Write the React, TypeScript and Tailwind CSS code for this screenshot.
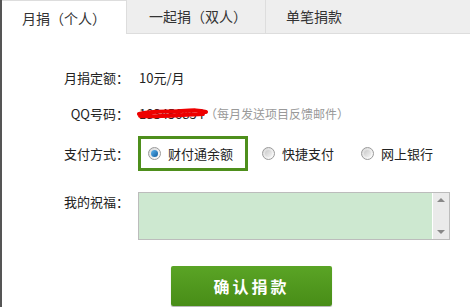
import React from "react";

const font = { fontFamily: '"Noto Sans CJK SC", "Liberation Sans", sans-serif' };

const Radio = ({ checked }: { checked?: boolean }) => (
  <span className="flex h-[13px] w-[13px] items-center justify-center rounded-full border border-[#9a9a9a] bg-gradient-to-br from-[#d8d8d8] to-[#ffffff]">
    {checked ? (
      <span className="h-[7px] w-[7px] rounded-full bg-gradient-to-br from-[#5cb6f0] to-[#0b5c9e]" />
    ) : (
      <span className="h-[7px] w-[7px] rounded-full bg-gradient-to-br from-[#c9c9c9] to-[#f4f4f4]" />
    )}
  </span>
);

const App = () => {
  return (
    <div style={font} className="flex h-[307px] w-[470px] flex-col overflow-hidden border-l-2 border-[#555] bg-white text-[13px] text-[#222]">
      {/* tabs */}
      <div className="flex h-[34px] shrink-0">
        <div className="flex w-[125px] items-center justify-center border-t border-r border-[#ddd] bg-white pt-[1px] text-[14px] text-[#333]">
          月捐（个人）
        </div>
        <div className="flex w-[139px] items-center justify-center border-r border-b border-[#ddd] bg-[#eee] pl-[4px] text-[14px] text-[#333]">
          一起捐（双人）
        </div>
        <div className="flex flex-1 items-center border-b border-[#ddd] bg-[#eee] pl-[20px] text-[14px] text-[#333]">
          单笔捐款
        </div>
      </div>

      {/* form */}
      <div className="flex flex-col pt-[34px]">
        <div className="flex h-[20px] items-center">
          <span className="w-[127px] text-right">月捐定额：</span>
          <span className="ml-[10px]">10元/月</span>
        </div>

        <div className="mt-[16px] flex h-[20px] items-center">
          <span className="w-[127px] text-right">QQ号码：</span>
          <span className="relative ml-[10px]">
            183456854
            <svg className="absolute left-[-2px] top-[2px]" width="72" height="14" viewBox="0 0 72 14">
              <path d="M2 8 C 14 5, 30 6, 44 5 S 62 4, 69 6 M3 10 C 20 11, 40 9, 66 8" stroke="#ee0000" strokeWidth="4" fill="none" strokeLinecap="round" />
            </svg>
          </span>
          <span className="ml-[1px] text-[12px] text-[#999]">（每月发送项目反馈邮件）</span>
        </div>

        <div className="mt-[12px] flex h-[35px] items-center">
          <span className="w-[127px] text-right">支付方式：</span>
          <div className="ml-[9px] flex h-[35px] w-[110px] items-center border-[3px] border-[#4e8f1c] pl-[7px]">
            <Radio checked />
            <span className="ml-[7px]">财付通余额</span>
          </div>
          <div className="ml-[14px] flex items-center">
            <Radio />
            <span className="ml-[7px]">快捷支付</span>
          </div>
          <div className="ml-[27px] flex items-center">
            <Radio />
            <span className="ml-[7px]">网上银行</span>
          </div>
        </div>

        <div className="mt-[21px] flex items-start">
          <span className="w-[127px] text-right">我的祝福：</span>
          <div className="ml-[9px] flex h-[48px] w-[312px] border border-[#bcbcbc] bg-[#cde8d0]">
            <div className="flex-1" />
            <div className="flex w-[17px] flex-col items-center justify-between border-l border-white bg-[#eaeaea] py-[5px]">
              <span className="h-0 w-0 border-x-[4px] border-b-[4px] border-x-transparent border-b-[#888]" />
              <span className="h-0 w-0 border-x-[4px] border-t-[4px] border-x-transparent border-t-[#888]" />
            </div>
          </div>
        </div>

        <div className="mt-[26px] flex">
          <button className="ml-[169px] h-[40px] w-[161px] rounded-[2px] bg-gradient-to-b from-[#5aa425] to-[#488d17] text-[16px] font-bold tracking-[3px] text-white shadow-[0_1px_1px_rgba(0,0,0,0.3)]">
            确认捐款
          </button>
        </div>
      </div>
    </div>
  );
};

export default App;
